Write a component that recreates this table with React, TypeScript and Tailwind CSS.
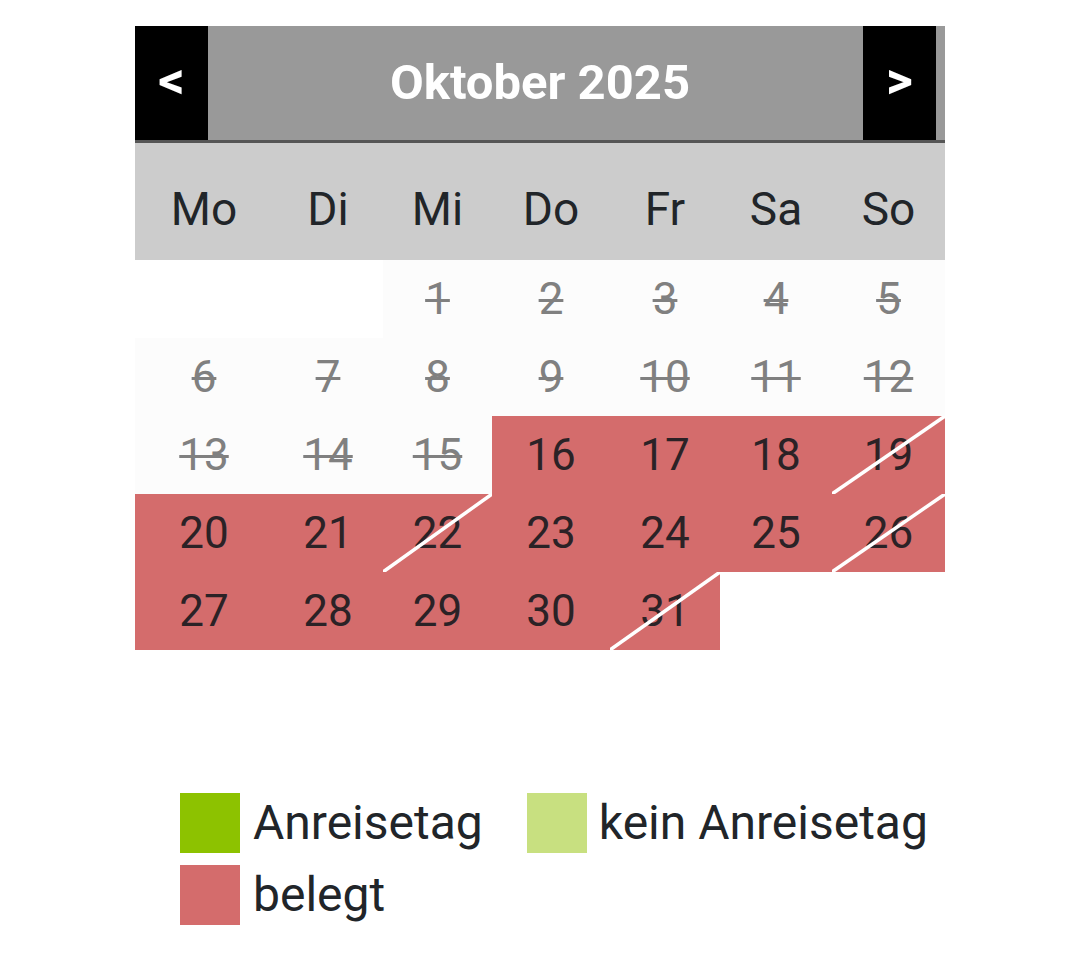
import React from "react";

type Cell = { d: number | null; kind: "empty" | "past" | "busy"; diag?: boolean };

const cols = [138, 110, 109, 118, 110, 112, 113];
const days = ["Mo", "Di", "Mi", "Do", "Fr", "Sa", "So"];

function buildCells(): Cell[] {
  const cells: Cell[] = [{ d: null, kind: "empty" }, { d: null, kind: "empty" }];
  for (let i = 1; i <= 31; i++) {
    cells.push({
      d: i,
      kind: i <= 15 ? "past" : "busy",
      diag: [19, 22, 26, 31].includes(i),
    });
  }
  while (cells.length < 35) cells.push({ d: null, kind: "empty" });
  return cells;
}

export default function App() {
  const cells = buildCells();
  return (
    <div
      className="min-h-[975px] w-[1080px] bg-white"
      style={{ fontFamily: "Roboto, 'Liberation Sans', sans-serif" }}
    >
      <div className="pt-[26px] flex flex-col items-center">
        <div className="w-[810px]">
          <div className="relative flex h-[114px] bg-[#999999] pr-[9px]">
            <div className="w-[73px] bg-black flex items-center justify-center text-white font-bold text-[52px] pb-[4px]">
              &lt;
            </div>
            <div className="flex-1" />
            <div className="w-[73px] bg-black flex items-center justify-center text-white font-bold text-[52px] pb-[4px]">
              &gt;
            </div>
            <div className="absolute inset-0 flex items-center justify-center text-white font-bold text-[49px] pointer-events-none">
              Oktober 2025
            </div>
          </div>
          <div className="h-[3px] bg-[#555555]" />
          <div
            className="grid bg-[#cccccc] h-[117px]"
            style={{ gridTemplateColumns: cols.map((c) => c + "px").join(" ") }}
          >
            {days.map((d) => (
              <div key={d} className="flex items-center justify-center text-[46px] text-[#212529] pt-[15px]">
                {d}
              </div>
            ))}
          </div>
          <div
            className="grid"
            style={{ gridTemplateColumns: cols.map((c) => c + "px").join(" ") }}
          >
            {cells.map((c, i) => (
              <div
                key={i}
                className={
                  "relative h-[78px] flex items-center justify-center text-[44px] " +
                  (c.kind === "empty"
                    ? "bg-white"
                    : c.kind === "past"
                    ? "bg-[#fcfcfc] text-[#808080] line-through decoration-[3px]"
                    : "bg-[#d46c6c] text-[#2b2226]")
                }
              >
                {c.d !== null && <span className="relative z-0">{c.d}</span>}
                {c.diag && (
                  <svg
                    className="absolute inset-0 w-full h-full z-10"
                    viewBox="0 0 100 100"
                    preserveAspectRatio="none"
                  >
                    <line
                      x1="0"
                      y1="100"
                      x2="100"
                      y2="0"
                      stroke="white"
                      strokeWidth="3.5"
                      vectorEffect="non-scaling-stroke"
                    />
                  </svg>
                )}
              </div>
            ))}
          </div>
        </div>
        <div className="w-[810px] mt-[143px] pl-[45px] flex flex-col gap-[12px] text-[48px] text-[#212529]">
          <div className="flex items-center h-[60px]">
            <div className="w-[60px] h-[60px] bg-[#8dc200]" />
            <span className="ml-[13px]">Anreisetag</span>
            <div className="ml-[44px] w-[60px] h-[60px] bg-[#c8e080]" />
            <span className="ml-[12px]">kein Anreisetag</span>
          </div>
          <div className="flex items-center h-[60px]">
            <div className="w-[60px] h-[60px] bg-[#d46c6c]" />
            <span className="ml-[13px]">belegt</span>
          </div>
        </div>
      </div>
    </div>
  );
}
